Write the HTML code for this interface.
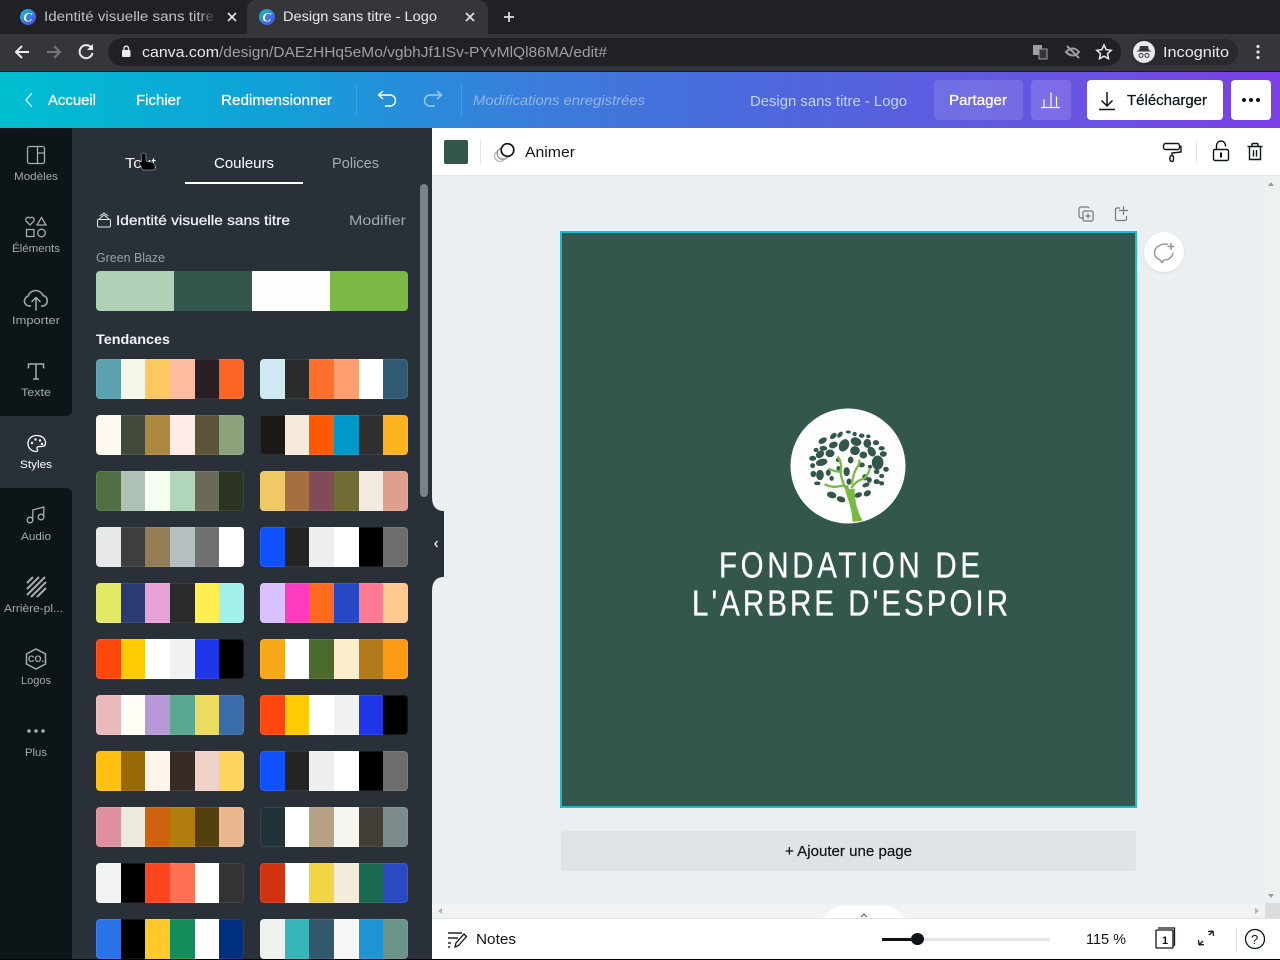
<!DOCTYPE html>
<html lang="fr"><head><meta charset="utf-8"><title>Design sans titre - Logo</title>
<style>
*{box-sizing:border-box}
html,body{margin:0;padding:0;width:1280px;height:960px;overflow:hidden;background:#ebeff1;font-family:"Liberation Sans",sans-serif}
.a{position:absolute}
.p{position:absolute;width:148px;height:40px;display:flex;border-radius:4px;overflow:hidden}
.p i{display:block;width:25px;height:40px}
.p i:nth-child(2),.p i:nth-child(5){width:24px}
.p:after{content:"";position:absolute;inset:0;border-radius:4px;box-shadow:inset 0 0 0 1px rgba(255,255,255,.09)}
.l{left:96px}.r{left:260px}
text{white-space:pre}
</style></head><body>
<div class="a" style="left:0;top:0;width:1280px;height:34px;background:#202124"></div>
<div class="a" style="left:0;top:34px;width:1280px;height:38px;background:#35363a"></div>
<div class="a" style="left:247px;top:0;width:241px;height:42px;background:#35363a;border-radius:9px 9px 0 0"></div>
<div class="a" style="left:108px;top:38px;width:1013px;height:28px;background:#202124;border-radius:14px"></div>
<div class="a" style="left:1132px;top:39px;width:106px;height:26px;background:#292a2d;border-radius:13px"></div>
<div class="a" style="left:0;top:71px;width:1280px;height:1px;background:#1b1c1e"></div>
<div class="a" style="left:0;top:72px;width:1280px;height:56px;background:linear-gradient(90deg,#00bfd0 0%,#0fa2d8 20%,#3b7cdc 42%,#4f66dd 62%,#6a52e3 85%,#7d3fe6 100%)"></div>
<div class="a" style="left:934px;top:80px;width:89px;height:40px;background:rgba(255,255,255,.12);border-radius:4px"></div>
<div class="a" style="left:1031px;top:80px;width:40px;height:40px;background:rgba(255,255,255,.15);border-radius:4px"></div>
<div class="a" style="left:1087px;top:80px;width:136px;height:40px;background:#fff;border-radius:4px"></div>
<div class="a" style="left:1231px;top:80px;width:40px;height:40px;background:#fff;border-radius:4px"></div>

<div class="a" style="left:0;top:128px;width:432px;height:832px;background:#293038"></div>
<div class="a" style="left:0;top:128px;width:72px;height:288px;background:#0e1518;border-radius:0 0 6px 0"></div>
<div class="a" style="left:0;top:488px;width:72px;height:472px;background:#0e1518;border-radius:0 6px 0 0"></div>
<div class="a" style="left:420px;top:184px;width:8px;height:313px;background:#7b838a;border-radius:4px"></div>
<div class="a" style="left:185px;top:182px;width:118px;height:2px;background:#fff"></div>
<div class="a" style="left:432px;top:128px;width:848px;height:48px;background:#fff;border-bottom:1px solid #e2e5e7"></div>
<div class="a" style="left:444px;top:140px;width:24px;height:24px;background:#34574d;border-radius:2px"></div>
<div class="a" style="left:480px;top:140px;width:1px;height:24px;background:#e3e5e7"></div>
<div class="a" style="left:1196px;top:140px;width:1px;height:24px;background:#e3e5e7"></div>
<div class="a" style="left:1265px;top:176px;width:15px;height:742px;background:#eef1f2"></div>
<div class="a" style="left:432px;top:903px;width:848px;height:15px;background:#f1f2f2"></div>
<div class="a" style="left:1265px;top:903px;width:15px;height:15px;background:#dcdcdc"></div>
<div class="a" style="left:432px;top:918px;width:848px;height:42px;background:#fff;border-top:1px solid #dfe2e4"></div>
<div class="a" style="left:561px;top:831px;width:575px;height:40px;background:#dfe3e7;border-radius:3px"></div>
<div class="a" style="left:560px;top:231px;width:577px;height:577px;background:#34574d;border:2px solid #13bfd0"></div>
<div class="a" style="left:1144px;top:232px;width:40px;height:40px;background:#fff;border-radius:50%;box-shadow:0 1px 3px rgba(0,0,0,.08)"></div>
<div class="a" style="left:882px;top:938px;width:168px;height:3px;background:#e3e5e7"></div>
<div class="a" style="left:882px;top:938px;width:32px;height:3px;background:#111"></div>
<div class="a" style="left:911px;top:933px;width:13px;height:12px;background:#0e1518;border-radius:50%"></div>

<div class="p l" style="top:359px"><i style="background:#5ba1ae"></i><i style="background:#f5f5e9"></i><i style="background:#fdc95f"></i><i style="background:#fdbb9f"></i><i style="background:#2a1e25"></i><i style="background:#fc6524"></i></div>
<div class="p r" style="top:359px"><i style="background:#cfe9f2"></i><i style="background:#2a2b2d"></i><i style="background:#fe6f2c"></i><i style="background:#fe9e6e"></i><i style="background:#fff"></i><i style="background:#305a73"></i></div>
<div class="p l" style="top:415px"><i style="background:#fff9f1"></i><i style="background:#41493a"></i><i style="background:#ad893f"></i><i style="background:#ffece8"></i><i style="background:#5d5339"></i><i style="background:#8ba27a"></i></div>
<div class="p r" style="top:415px"><i style="background:#1a1918"></i><i style="background:#f6e8da"></i><i style="background:#ff5a00"></i><i style="background:#0099c9"></i><i style="background:#2f2f2f"></i><i style="background:#fdb31f"></i></div>
<div class="p l" style="top:471px"><i style="background:#4f6f42"></i><i style="background:#adc1b7"></i><i style="background:#f5ffef"></i><i style="background:#b0d5b8"></i><i style="background:#6a6a58"></i><i style="background:#2b3521"></i></div>
<div class="p r" style="top:471px"><i style="background:#eec966"></i><i style="background:#a66f3f"></i><i style="background:#834b58"></i><i style="background:#706c33"></i><i style="background:#f2e9e1"></i><i style="background:#e09f8d"></i></div>
<div class="p l" style="top:527px"><i style="background:#e5e7e8"></i><i style="background:#3e3e3e"></i><i style="background:#947d54"></i><i style="background:#b5bfc1"></i><i style="background:#707070"></i><i style="background:#fff"></i></div>
<div class="p r" style="top:527px"><i style="background:#0f50ff"></i><i style="background:#242424"></i><i style="background:#efefef"></i><i style="background:#fff"></i><i style="background:#000"></i><i style="background:#6d6d6d"></i></div>
<div class="p l" style="top:583px"><i style="background:#e2e863"></i><i style="background:#2b3a72"></i><i style="background:#e9a2d8"></i><i style="background:#2a2a2a"></i><i style="background:#ffee50"></i><i style="background:#a1f0e9"></i></div>
<div class="p r" style="top:583px"><i style="background:#d9c0ff"></i><i style="background:#ff3cc0"></i><i style="background:#ff6a1f"></i><i style="background:#2648c4"></i><i style="background:#ff7a93"></i><i style="background:#ffc98f"></i></div>
<div class="p l" style="top:639px"><i style="background:#ff470d"></i><i style="background:#ffcb00"></i><i style="background:#fff"></i><i style="background:#f0f1f1"></i><i style="background:#1f35e8"></i><i style="background:#000"></i></div>
<div class="p r" style="top:639px"><i style="background:#f7a917"></i><i style="background:#fff"></i><i style="background:#4c6a2c"></i><i style="background:#fdeecb"></i><i style="background:#b37a1b"></i><i style="background:#fd9a13"></i></div>
<div class="p l" style="top:695px"><i style="background:#ebb9bb"></i><i style="background:#fffdf5"></i><i style="background:#b799d9"></i><i style="background:#5aa792"></i><i style="background:#ebdb5e"></i><i style="background:#3a6cad"></i></div>
<div class="p r" style="top:695px"><i style="background:#ff470d"></i><i style="background:#ffcb00"></i><i style="background:#fff"></i><i style="background:#f0f1f1"></i><i style="background:#1f35e8"></i><i style="background:#000"></i></div>
<div class="p l" style="top:751px"><i style="background:#ffc012"></i><i style="background:#976a05"></i><i style="background:#fff5ea"></i><i style="background:#382b26"></i><i style="background:#efd2c8"></i><i style="background:#ffd55f"></i></div>
<div class="p r" style="top:751px"><i style="background:#0f50ff"></i><i style="background:#242424"></i><i style="background:#efefef"></i><i style="background:#fff"></i><i style="background:#000"></i><i style="background:#6d6d6d"></i></div>
<div class="p l" style="top:807px"><i style="background:#de8fa0"></i><i style="background:#ede9dc"></i><i style="background:#d0620f"></i><i style="background:#b27d0f"></i><i style="background:#553f10"></i><i style="background:#ebb78f"></i></div>
<div class="p r" style="top:807px"><i style="background:#233239"></i><i style="background:#fff"></i><i style="background:#b5a184"></i><i style="background:#f5f4ef"></i><i style="background:#443e38"></i><i style="background:#7c8a8b"></i></div>
<div class="p l" style="top:863px"><i style="background:#f1f2f2"></i><i style="background:#000"></i><i style="background:#ff451d"></i><i style="background:#ff7053"></i><i style="background:#fff"></i><i style="background:#333"></i></div>
<div class="p r" style="top:863px"><i style="background:#d13311"></i><i style="background:#fff"></i><i style="background:#f2d544"></i><i style="background:#f3ecdb"></i><i style="background:#196850"></i><i style="background:#2a49c3"></i></div>
<div class="p l" style="top:919px"><i style="background:#2a72e8"></i><i style="background:#000"></i><i style="background:#ffc929"></i><i style="background:#158d5b"></i><i style="background:#fff"></i><i style="background:#00307f"></i></div>
<div class="p r" style="top:919px"><i style="background:#eff1ee"></i><i style="background:#38b4bb"></i><i style="background:#32586d"></i><i style="background:#f5f6f6"></i><i style="background:#1f95d5"></i><i style="background:#6c9389"></i></div>
<div class="a" style="left:96px;top:271px;width:312px;height:40px;display:flex;border-radius:4px;overflow:hidden"><div style="width:78px;background:#afd2b6"></div><div style="width:78px;background:#34574d"></div><div style="width:78px;background:#fdfefb"></div><div style="width:78px;background:#7ab944"></div></div>

<svg class="a" style="left:0;top:0" width="1280" height="960" viewBox="0 0 1280 960" font-family="'Liberation Sans',sans-serif">
<defs><linearGradient id="fav" x1="0" y1="0" x2="1" y2="1"><stop offset="0" stop-color="#16c3d6"/><stop offset="1" stop-color="#5b3fe0"/></linearGradient>
<linearGradient id="fade" x1="0" y1="0" x2="1" y2="0"><stop offset="0" stop-color="#202124" stop-opacity="0"/><stop offset="1" stop-color="#202124"/></linearGradient></defs>
<!-- Chrome tabs -->
<circle cx="28" cy="17" r="8" fill="url(#fav)"/><text x="23.500" y="21.500" font-family="'Liberation Serif',serif" font-style="italic" font-weight="bold" font-size="13" fill="#fff">C</text>
<circle cx="267" cy="17" r="8" fill="url(#fav)"/><text x="262.500" y="21.500" font-family="'Liberation Serif',serif" font-style="italic" font-weight="bold" font-size="13" fill="#fff">C</text>
<text x="44" y="21" font-size="13.500" fill="#bdc1c6" textLength="170" lengthAdjust="spacingAndGlyphs">Identité visuelle sans titre</text>
<rect x="200" y="8" width="16" height="18" fill="url(#fade)"/>
<text x="283" y="21" font-size="13.500" fill="#e8eaed" textLength="154" lengthAdjust="spacingAndGlyphs">Design sans titre - Logo</text>
<path d="M228 13l8 8M236 13l-8 8M466 13l8 8M474 13l-8 8M504 17h10M509 12v10" stroke="#dfe1e5" stroke-width="1.700" fill="none"/>
<!-- Chrome toolbar -->
<path d="M29 52H16M22 46l-6 6 6 6" stroke="#e8eaed" stroke-width="2" fill="none"/>
<path d="M47 52h13M54 46l6 6-6 6" stroke="#75777b" stroke-width="2" fill="none"/>
<path d="M91.500 48a6.500 6.500 0 1 0 1 5" stroke="#e8eaed" stroke-width="2" fill="none"/><path d="M93 44v6h-6z" fill="#e8eaed"/>
<rect x="122" y="50" width="8.500" height="7" rx="1" fill="#e8eaed"/><path d="M124 50v-2a2.300 2.300 0 0 1 4.500 0v2" stroke="#e8eaed" stroke-width="1.300" fill="none"/>
<text x="142" y="57" font-size="15" fill="#e8eaed" textLength="77" lengthAdjust="spacingAndGlyphs">canva.com</text>
<text x="219" y="57" font-size="15" fill="#9aa0a6" textLength="388" lengthAdjust="spacingAndGlyphs">/design/DAEzHHq5eMo/vgbhJf1ISv-PYvMlQl86MA/edit#</text>
<rect x="1033" y="45" width="9" height="10" fill="#9aa0a6"/><rect x="1039" y="49" width="8" height="10" fill="#35363a" stroke="#9aa0a6"/>
<path d="M1066 52q7-7 13 0q-6 7-13 0zM1067 46l12 12" stroke="#9aa0a6" stroke-width="2" fill="none"/>
<path d="M1104 45l2.200 4.700 5 .6-3.700 3.400 1 5-4.500-2.500-4.500 2.500 1-5-3.700-3.400 5-.6z" stroke="#e8eaed" stroke-width="1.500" fill="none"/>
<circle cx="1144" cy="52" r="11" fill="#e8eaed"/><path d="M1137 51.500h14v-1h-2l-1-4.500h-8l-1 4.500h-2z" fill="#35363a"/><circle cx="1141" cy="55.500" r="2" fill="none" stroke="#35363a"/><circle cx="1147" cy="55.500" r="2" fill="none" stroke="#35363a"/>
<text x="1163" y="57" font-size="15" fill="#e8eaed" textLength="66" lengthAdjust="spacingAndGlyphs">Incognito</text>
<circle cx="1258" cy="46.500" r="1.600" fill="#dfe1e5"/><circle cx="1258" cy="52" r="1.600" fill="#dfe1e5"/><circle cx="1258" cy="57.500" r="1.600" fill="#dfe1e5"/>
<!-- Canva top bar -->
<path d="M32 93l-6 7 6 7" stroke="#fff" stroke-width="1.300" fill="none" opacity=".85"/>
<g font-size="14.500" fill="#fff" stroke="#fff" stroke-width=".25">
<text x="48" y="105" textLength="48" lengthAdjust="spacingAndGlyphs">Accueil</text>
<text x="136" y="105" textLength="45" lengthAdjust="spacingAndGlyphs">Fichier</text>
<text x="221" y="105" textLength="111" lengthAdjust="spacingAndGlyphs">Redimensionner</text>
<text x="949" y="105" textLength="58" lengthAdjust="spacingAndGlyphs">Partager</text>
</g>
<path d="M379 95h11a5.500 5.500 0 0 1 0 11h-5M383 91l-4.500 4 4.500 4" stroke="#fff" stroke-width="1.400" fill="none"/>
<path d="M441 95h-11a5.500 5.500 0 0 0 0 11h5M437 91l4.500 4-4.500 4" stroke="#fff" stroke-width="1.400" fill="none" opacity=".55"/>
<rect x="461" y="84" width="1" height="32" fill="#fff" opacity=".14"/>
<rect x="356" y="84" width="1" height="32" fill="#fff" opacity=".14"/>
<text x="473" y="105" font-size="14" font-style="italic" fill="#a9c8ef" fill-opacity=".75" textLength="172" lengthAdjust="spacingAndGlyphs">Modifications enregistrées</text>
<text x="750" y="106" font-size="14.500" fill="#c6d3f6" textLength="157" lengthAdjust="spacingAndGlyphs">Design sans titre - Logo</text>
<path d="M1041 107.500h19M1044 106.500v-7M1051 106.500v-14M1056.500 106.500v-10" stroke="#fff" stroke-width="1.200" fill="none"/>
<path d="M1107 92v14M1101.500 100.500l5.500 5.500 5.500-5.500M1099 109.500h16" stroke="#0e1518" stroke-width="1.500" fill="none"/>
<text x="1127" y="105" font-size="14.500" fill="#0e1518" stroke="#0e1518" stroke-width=".25" textLength="80" lengthAdjust="spacingAndGlyphs">Télécharger</text>
<circle cx="1244" cy="100" r="2" fill="#0e1518"/><circle cx="1251" cy="100" r="2" fill="#0e1518"/><circle cx="1258" cy="100" r="2" fill="#0e1518"/>
<!-- Side nav icons -->
<g fill="none" stroke="#a7acb0" stroke-width="1.300">
<rect x="27.500" y="146.500" width="17" height="17" rx="2"/><path d="M37.500 146.500v17M37.500 153h7"/>
<path d="M30 225l-3.800-3.800a2.500 2.500 0 0 1 3.800-3.200 2.500 2.500 0 0 1 3.800 3.200zM41.500 217.500l4.500 7.500h-9zM26.500 229.500h7.500v7h-7.500z"/><circle cx="41.500" cy="233" r="3.800"/>
<path d="M31 306h-1.500a5 5 0 0 1-1.500-9.800 8 8 0 0 1 15-.8 5.500 5.500 0 0 1 .5 10.600h-2.500M36 310.500v-12M31.500 302l4.500-4.500 4.500 4.500" stroke-width="1.500"/>
<path d="M28.500 368v-4h15v4M36 364v15M33 379h6M28.500 368l-1-.5M43.500 368l1-.5" stroke-width="1.500"/>
</g>
<g fill="none" stroke="#fff" stroke-width="1.300"><path d="M36.500 435.500c-5 0-8.500 3.500-8.500 8s3.500 8 8 8c2 0 2-1.500 1.200-2.500-.8-1.500.5-2.500 2-2.500h2.800c2.500 0 3.500-1.500 3.500-3.500 0-4.500-3.500-7.500-9-7.500z"/></g>
<circle cx="32" cy="443" r="1.200" fill="#fff"/><circle cx="35.500" cy="439.500" r="1.200" fill="#fff"/><circle cx="40" cy="440.500" r="1.200" fill="#fff"/><circle cx="42" cy="444" r="1.200" fill="#fff"/>
<g fill="none" stroke="#a7acb0" stroke-width="1.300">
<circle cx="30" cy="520" r="2.800"/><circle cx="41" cy="517" r="2.800"/><path d="M32.800 520v-10l11-3v10"/>
<path d="M27 583l6-6M27 589l12-12M27 595l18-18M31 597l15-15M37 597l9-9" stroke-width="2"/>
<path d="M36 649l9.500 5v10l-9.500 5-9.500-5v-10z" stroke-width="1.500"/>
</g>
<text x="36" y="662" text-anchor="middle" font-size="9" font-weight="bold" fill="#a7acb0">CO.</text>
<circle cx="29" cy="731" r="1.800" fill="#a7acb0"/><circle cx="36" cy="731" r="1.800" fill="#a7acb0"/><circle cx="43" cy="731" r="1.800" fill="#a7acb0"/>
<g font-size="11" fill="#a5aaae" text-anchor="start">
<text x="14" y="180" textLength="44" lengthAdjust="spacingAndGlyphs">Modèles</text>
<text x="12" y="252" textLength="48" lengthAdjust="spacingAndGlyphs">Éléments</text>
<text x="12" y="324" textLength="48" lengthAdjust="spacingAndGlyphs">Importer</text>
<text x="21" y="396" textLength="30" lengthAdjust="spacingAndGlyphs">Texte</text>
<text x="20" y="468" fill="#fff" textLength="32" lengthAdjust="spacingAndGlyphs">Styles</text>
<text x="21" y="540" textLength="30" lengthAdjust="spacingAndGlyphs">Audio</text>
<text x="4" y="612" textLength="59" lengthAdjust="spacingAndGlyphs">Arrière-pl...</text>
<text x="21" y="684" textLength="30" lengthAdjust="spacingAndGlyphs">Logos</text>
<text x="25" y="756" textLength="22" lengthAdjust="spacingAndGlyphs">Plus</text>
</g>
<!-- Panel -->
<text x="125" y="168" font-size="14.500" fill="#f2f3f4" textLength="31" lengthAdjust="spacingAndGlyphs">Tout</text>
<text x="214" y="168" font-size="14.500" fill="#fff" textLength="60" lengthAdjust="spacingAndGlyphs">Couleurs</text>
<text x="332" y="168" font-size="14.500" fill="#a8adb2" textLength="47" lengthAdjust="spacingAndGlyphs">Polices</text>
<path d="M141 155q0-2 2.500-2t2.500 2v6l7 1.500 2 2v5.500h-12l-4-7q0-2 2.500-1z" fill="#000" stroke="#d8dadc" stroke-width=".5"/>
<g fill="none" stroke="#e6e8ea" stroke-width="1"><rect x="97.500" y="219.500" width="13" height="7.500" rx="1"/><path d="M99 219l5-4 5 4M100 216l4-3 4 3"/></g>
<text x="116" y="225" font-size="14" fill="#f2f3f4" stroke="#f2f3f4" stroke-width=".25" textLength="174" lengthAdjust="spacingAndGlyphs">Identité visuelle sans titre</text>
<text x="349" y="225" font-size="14" fill="#a4a9ad" textLength="57" lengthAdjust="spacingAndGlyphs">Modifier</text>
<text x="96" y="262" font-size="12.500" fill="#9a9fa5" textLength="69" lengthAdjust="spacingAndGlyphs">Green Blaze</text>
<text x="96" y="344" font-size="14" font-weight="bold" fill="#f4f5f6" textLength="74" lengthAdjust="spacingAndGlyphs">Tendances</text>
<!-- Collapse handle -->
<path d="M432 497C432 506 436 511 444 511V577C436 577 432 582 432 591Z" fill="#293038"/>
<path d="M437.500 541l-2.500 3 2.500 3" stroke="#fff" stroke-width="1.300" fill="none"/>
<!-- Context toolbar -->
<circle cx="500" cy="156" r="5.500" fill="#fff" stroke="#b9bcbe" stroke-width="1.400"/><circle cx="503" cy="153.500" r="5.800" fill="#fff" stroke="#9a9d9f" stroke-width="1.400"/><circle cx="507.500" cy="150" r="6.300" fill="#fff" stroke="#111" stroke-width="1.700"/>
<text x="525" y="157" font-size="14.500" fill="#0e1518" textLength="50" lengthAdjust="spacingAndGlyphs">Animer</text>
<g fill="none" stroke="#0e1518" stroke-width="1.400">
<rect x="1163.500" y="143.500" width="16" height="6" rx="2"/><path d="M1179.500 146.500h1.500v5.500l-9 1v2.500"/><rect x="1170" y="155.500" width="3.500" height="6" rx="1.700"/>
<rect x="1213.500" y="149.500" width="15" height="11" rx="1.500"/><path d="M1216.500 149.500v-4a4.500 4.500 0 0 1 9 0v1"/>
<path d="M1221 152.500v5" stroke-width="2"/>
<path d="M1247.500 146.500h15M1252 146.500v-2a1 1 0 0 1 1-1h4a1 1 0 0 1 1 1v2M1249.500 146.500v13h11v-13M1253.500 150v6.500M1256.500 150v6.500"/>
</g>
<!-- Canvas icons -->
<g fill="none" stroke="#707a80" stroke-width="1.200">
<path d="M1084 218h-3a2 2 0 0 1-2-2v-7a2 2 0 0 1 2-2h7l1 1"/><rect x="1083" y="211" width="10" height="10" rx="1.500"/><path d="M1088 213.500v5M1085.500 216h5"/>
<path d="M1120 208h-3a1.500 1.500 0 0 0-1.500 1.500v9.500a1.500 1.500 0 0 0 1.500 1.500h8a1.500 1.500 0 0 0 1.500-1.500v-3M1123.500 206v9M1119 210.500h9"/>
<path d="M1168 244.500c-6-1.500-13.500 2-13.500 8 0 3.500 2 6 5 7l2.500 3 2-2.500c5 0 9-3.500 9-7.500" stroke="#8a9297" stroke-width="1.400"/><path d="M1171 243v7M1167.500 246.500h7" stroke="#8a9297" stroke-width="1.400"/>
</g>
<!-- Logo -->
<circle cx="848" cy="466" r="57.500" fill="#fdfefb"/>
<g transform="translate(780 400) scale(.3333)" fill="#34574d" stroke="#34574d" stroke-width="3">
<ellipse cx="180" cy="104" rx="9" ry="5" transform="rotate(-50 180 104)"/><ellipse cx="205" cy="96" rx="6" ry="3"/><ellipse cx="224" cy="102" rx="5" ry="5"/><ellipse cx="245" cy="107" rx="7" ry="5"/><ellipse cx="265" cy="109" rx="5" ry="4"/>
<ellipse cx="160" cy="108" rx="10" ry="6" transform="rotate(-40 160 108)"/><ellipse cx="128" cy="122" rx="12" ry="7" transform="rotate(-30 128 122)"/><ellipse cx="228" cy="125" rx="15" ry="11" transform="rotate(20 228 125)"/><ellipse cx="262" cy="130" rx="10" ry="12"/><ellipse cx="288" cy="128" rx="8" ry="6"/><ellipse cx="192" cy="136" rx="13" ry="18" transform="rotate(30 192 136)"/><ellipse cx="160" cy="135" rx="12" ry="8" transform="rotate(-20 160 135)"/><ellipse cx="130" cy="145" rx="10" ry="6"/><ellipse cx="108" cy="150" rx="6" ry="5"/><ellipse cx="120" cy="163" rx="12" ry="9" transform="rotate(-40 120 163)"/><ellipse cx="150" cy="160" rx="12" ry="10"/><ellipse cx="225" cy="152" rx="13" ry="12"/><ellipse cx="250" cy="165" rx="10" ry="9"/><ellipse cx="275" cy="155" rx="10" ry="14" transform="rotate(-30 275 155)"/><ellipse cx="305" cy="145" rx="8" ry="5"/><ellipse cx="310" cy="162" rx="9" ry="7"/><ellipse cx="293" cy="188" rx="16" ry="20"/><ellipse cx="125" cy="187" rx="16" ry="9" transform="rotate(-15 125 187)"/><ellipse cx="98" cy="175" rx="9" ry="6"/><ellipse cx="98" cy="197" rx="6" ry="6"/><ellipse cx="175" cy="180" rx="6" ry="5"/><ellipse cx="212" cy="180" rx="7" ry="9"/><ellipse cx="245" cy="195" rx="8" ry="6"/><ellipse cx="270" cy="200" rx="5" ry="4"/><ellipse cx="318" cy="208" rx="7" ry="6"/><ellipse cx="290" cy="215" rx="7" ry="6"/><ellipse cx="305" cy="228" rx="6" ry="5"/><ellipse cx="290" cy="245" rx="8" ry="6"/><ellipse cx="268" cy="240" rx="6" ry="7"/><ellipse cx="255" cy="232" rx="7" ry="8"/><ellipse cx="305" cy="250" rx="6" ry="5"/><ellipse cx="120" cy="225" rx="10" ry="14"/><ellipse cx="100" cy="222" rx="7" ry="8"/><ellipse cx="145" cy="218" rx="6" ry="8"/><ellipse cx="155" cy="235" rx="5" ry="6"/><ellipse cx="112" cy="250" rx="8" ry="4"/><ellipse cx="175" cy="205" rx="4" ry="6"/><ellipse cx="200" cy="215" rx="8" ry="12"/><ellipse cx="207" cy="245" rx="6" ry="8"/><ellipse cx="200" cy="262" rx="4" ry="4"/><ellipse cx="155" cy="285" rx="13" ry="8" transform="rotate(15 155 285)"/><ellipse cx="183" cy="298" rx="12" ry="7" transform="rotate(20 183 298)"/><ellipse cx="235" cy="285" rx="10" ry="6" transform="rotate(-20 235 285)"/><ellipse cx="262" cy="280" rx="10" ry="7" transform="rotate(-30 262 280)"/><ellipse cx="258" cy="255" rx="10" ry="5" transform="rotate(-20 258 255)"/>
</g>
<g transform="translate(780 400) scale(.3333)" fill="none" stroke="#7ab944" stroke-linecap="round">
<path d="M206 275c-2-18-16-20-30-16-12 3-28 0-40-5M195 262c-8-20-16-40-12-58 2-10-4-24-8-32M215 250c6-22 8-38 18-50 4-6 6-12 5-18M215 262c10-14 22-22 36-26 6-2 14-16 18-28M180 215c-10 0-22-3-32-8" stroke-width="7"/>
<path d="M218 366C216 335 208 305 194 268L224 266C224 310 235 340 248 362Z" fill="#7ab944" stroke="none"/>
</g>
<text transform="translate(719 577.500) scale(.82 1)" font-size="36" fill="#fdfefb" stroke="#fdfefb" stroke-width=".3" textLength="318.300" lengthAdjust="spacing">FONDATION DE</text>
<text transform="translate(692 615.500) scale(.82 1)" font-size="36" fill="#fdfefb" stroke="#fdfefb" stroke-width=".3" textLength="385.400" lengthAdjust="spacing">L'ARBRE D'ESPOIR</text>
<!-- Footer -->
<text x="785" y="856" font-size="14.500" fill="#0e1518" stroke="#0e1518" stroke-width=".2" textLength="127" lengthAdjust="spacingAndGlyphs">+ Ajouter une page</text>
<path d="M1268 186l3-4 3 4zM1268 894l3 4 3-4z" fill="#9a9d9f"/><path d="M442 908l-4 3 4 3zM1255 908l4 3-4 3z" fill="#b0b3b5"/>
<path d="M818 918c12 0 10-12 26-12h40c16 0 14 12 26 12z" fill="#fff"/>
<path d="M861 917l3-3 3 3" stroke="#555" stroke-width="1" fill="none"/>
<g fill="none" stroke="#0e1518" stroke-width="1.300">
<path d="M448 933h14M448 938h10M448 943h3M448 947h2" stroke="#222" stroke-width="1.500"/><path d="M455 947l1-4 8-9 2.500 2.500-8 9z"/>
<rect x="1156" y="930" width="17" height="18" rx="1"/><path d="M1158 928h16.500v18"/>
<path d="M1199 945l-.5-5M1199 945l5-.5M1199 945l4-4M1213 931l.5 5M1213 931l-5 .5M1213 931l-4 4"/>
<circle cx="1255" cy="939" r="9.500"/>
</g>
<text x="1162" y="944" font-size="11" font-weight="bold" fill="#0e1518">1</text>
<text x="1251" y="944" font-size="13" fill="#0e1518">?</text>
<rect x="1236" y="929" width="1" height="22" fill="#e3e5e7"/>
<text x="476" y="944" font-size="14.500" fill="#0e1518" textLength="40" lengthAdjust="spacingAndGlyphs">Notes</text>
<text x="1086" y="944" font-size="14.500" fill="#0e1518" textLength="40" lengthAdjust="spacingAndGlyphs">115 %</text>
<rect x="0" y="959" width="1280" height="1" fill="#000"/>
</svg>
</body></html>
